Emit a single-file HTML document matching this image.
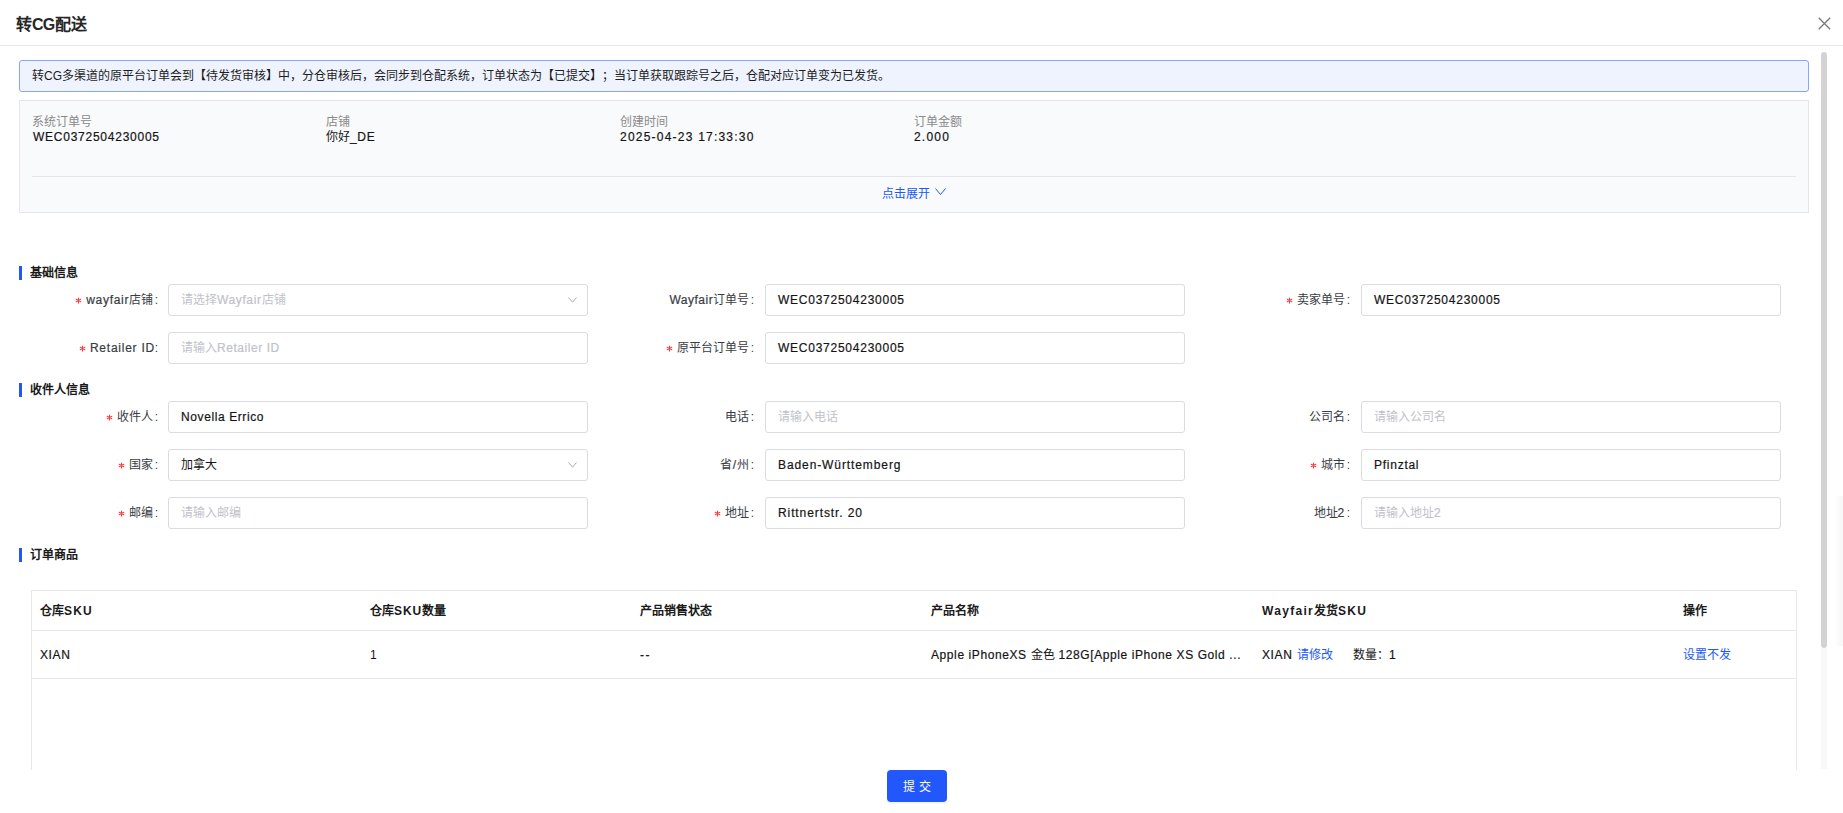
<!DOCTYPE html>
<html lang="zh-CN"><head><meta charset="utf-8">
<style>
*{box-sizing:border-box;margin:0;padding:0}
html,body{text-spacing-trim:space-all;width:1843px;height:813px;overflow:hidden;background:#fff;font-family:"Liberation Sans",sans-serif;color:#222;font-size:12px}
.abs{position:absolute;white-space:nowrap}
[style*="letter-spacing"]{-webkit-text-stroke:.2px currentColor}
.th [style*="letter-spacing"],.title [style*="letter-spacing"]{-webkit-text-stroke:0}
.title{left:16px;top:16px;font-size:16px;font-weight:bold;color:#262626;line-height:18px}
.hline{left:0;top:45px;width:1843px;height:1px;background:#e8e8e8}
.close{left:1817px;top:16px;width:15px;height:15px}
.scroll{left:1821px;top:52px;width:6px;height:596px;background:#d3d3d3;border-radius:3px}
.track{left:1821px;top:648px;width:6px;height:121px;background:#f8f8f8}
.shadow{left:1834px;top:496px;width:9px;height:150px;background:linear-gradient(90deg,rgba(0,0,0,0),rgba(0,0,0,.03))}
.alert{left:19px;top:60px;width:1790px;height:32px;background:#eef3fe;border:1px solid #86a6f9;border-radius:3px;padding-left:12px;line-height:31px;font-size:12px;color:#1c1c1c}
.panel{left:19px;top:100px;width:1790px;height:113px;background:#f9fafc;border:1px solid #e4e6ea}
.plabel{font-size:12px;color:#8a8a8a;line-height:14px}
.pval{font-size:12px;color:#141414;line-height:14px}
.pdiv{left:32px;top:176px;width:1764px;height:1px;background:#e4e6ea}
.expand{left:882px;top:188px;color:#2058f7;font-size:12px;line-height:13px}
.chev{left:935px;top:187px;width:11px;height:9px}
.sec{font-size:12px;font-weight:bold;color:#1a1a1a;line-height:14px}
.bar{width:3px;height:14px;background:#2058f7}
.lbl{text-align:right;width:150px;font-size:12px;color:#383c44;line-height:32px;height:32px}
.ast{display:inline-block;width:7px;height:7px;margin-right:4px;vertical-align:0}
.inp{width:420px;height:32px;border:1px solid #dadcdf;border-radius:3px;background:#fff;padding-left:12px;line-height:30px;font-size:12px;color:#141414}
.ph{color:#bfc2c8}
.c{padding-left:1.5px}
.sel{position:absolute;right:10px;top:12px;width:9px;height:6px}
.th{font-size:12px;font-weight:bold;color:#1a1a1a;line-height:14px}
.td{font-size:12px;color:#141414;line-height:14px}
.link{color:#2058f7}
.btn{left:887px;top:770px;width:60px;height:32px;background:#2157fb;border-radius:4px;color:#fff;text-align:center;line-height:34px;font-size:12px;letter-spacing:4px;padding-left:4px;box-shadow:0 2px 0 rgba(5,80,255,.06)}
</style></head><body>
<div class="abs title">转<span style="letter-spacing:-.7px">CG</span>配送</div>
<svg class="abs close" viewBox="0 0 15 15"><path d="M1.7 1.7L13.2 13.2M13.2 1.7L1.7 13.2" stroke="#7a7a7a" stroke-width="1.3" fill="none"/></svg>
<div class="abs hline"></div>
<div class="abs shadow"></div>
<div class="abs scroll"></div>
<div class="abs track"></div>

<div class="abs alert">转CG多渠道的原平台订单会到【待发货审核】中，分仓审核后，会同步到仓配系统，订单状态为【已提交】；当订单获取跟踪号之后，仓配对应订单变为已发货。</div>

<div class="abs panel"></div>
<div class="abs plabel" style="left:32px;top:115px">系统订单号</div>
<div class="abs pval" id="p1" style="left:33px;top:130px;letter-spacing:.75px">WEC0372504230005</div>
<div class="abs plabel" style="left:326px;top:115px">店铺</div>
<div class="abs pval" style="left:326px;top:130px">你好<span id="p2" style="letter-spacing:.7px">_DE</span></div>
<div class="abs plabel" style="left:620px;top:115px">创建时间</div>
<div class="abs pval" id="p3" style="left:620px;top:130px;letter-spacing:1.22px">2025-04-23 17:33:30</div>
<div class="abs plabel" style="left:914px;top:115px">订单金额</div>
<div class="abs pval" id="p4" style="left:914px;top:130px;letter-spacing:1.2px">2.000</div>
<div class="abs pdiv"></div>
<div class="abs expand">点击展开</div>
<svg class="abs chev" viewBox="0 0 11 9"><path d="M0.5 1.5L5.5 7.5L10.5 1.5" stroke="#2058f7" stroke-width="1" fill="none"/></svg>

<!-- section 1 -->
<div class="abs bar" style="left:19px;top:266px"></div>
<div class="abs sec" style="left:30px;top:266px">基础信息</div>

<div class="abs lbl" style="left:8px;top:284px"><svg class="ast" viewBox="0 0 7 7"><path d="M3.5 .9V6.1M1.2 2.2L5.8 4.8M1.2 4.8L5.8 2.2" stroke="#f73a3f" stroke-width="1.05" stroke-linecap="round"/></svg><span style="letter-spacing:.7px">wayfair</span>店铺<span class="c">:</span></div>
<div class="abs inp" style="left:168px;top:284px"><span class="ph">请选择<span style="letter-spacing:.62px">Wayfair</span>店铺</span><svg class="sel" viewBox="0 0 9 6"><path d="M.5 .5L4.5 5.2L8.5 .5" stroke="#a9acb2" stroke-width="1" fill="none"/></svg></div>
<div class="abs lbl" style="left:604px;top:284px"><span style="letter-spacing:.5px">Wayfair</span>订单号<span class="c">:</span></div>
<div class="abs inp" style="left:765px;top:284px"><span style="letter-spacing:.75px">WEC0372504230005</span></div>
<div class="abs lbl" style="left:1200px;top:284px"><svg class="ast" viewBox="0 0 7 7"><path d="M3.5 .9V6.1M1.2 2.2L5.8 4.8M1.2 4.8L5.8 2.2" stroke="#f73a3f" stroke-width="1.05" stroke-linecap="round"/></svg>卖家单号<span class="c">:</span></div>
<div class="abs inp" style="left:1361px;top:284px"><span style="letter-spacing:.75px">WEC0372504230005</span></div>

<div class="abs lbl" style="left:8px;top:332px"><svg class="ast" viewBox="0 0 7 7"><path d="M3.5 .9V6.1M1.2 2.2L5.8 4.8M1.2 4.8L5.8 2.2" stroke="#f73a3f" stroke-width="1.05" stroke-linecap="round"/></svg><span style="letter-spacing:.75px">Retailer I</span><span style="letter-spacing:.5px">D</span>:</div>
<div class="abs inp" style="left:168px;top:332px"><span class="ph">请输入<span style="letter-spacing:.55px">Retailer ID</span></span></div>
<div class="abs lbl" style="left:604px;top:332px"><svg class="ast" viewBox="0 0 7 7"><path d="M3.5 .9V6.1M1.2 2.2L5.8 4.8M1.2 4.8L5.8 2.2" stroke="#f73a3f" stroke-width="1.05" stroke-linecap="round"/></svg>原平台订单号<span class="c">:</span></div>
<div class="abs inp" style="left:765px;top:332px"><span style="letter-spacing:.75px">WEC0372504230005</span></div>

<!-- section 2 -->
<div class="abs bar" style="left:19px;top:383px"></div>
<div class="abs sec" style="left:30px;top:383px">收件人信息</div>

<div class="abs lbl" style="left:8px;top:401px"><svg class="ast" viewBox="0 0 7 7"><path d="M3.5 .9V6.1M1.2 2.2L5.8 4.8M1.2 4.8L5.8 2.2" stroke="#f73a3f" stroke-width="1.05" stroke-linecap="round"/></svg>收件人<span class="c">:</span></div>
<div class="abs inp" style="left:168px;top:401px"><span style="letter-spacing:.6px">Novella Errico</span></div>
<div class="abs lbl" style="left:604px;top:401px">电话<span class="c">:</span></div>
<div class="abs inp" style="left:765px;top:401px"><span class="ph">请输入电话</span></div>
<div class="abs lbl" style="left:1200px;top:401px">公司名<span class="c">:</span></div>
<div class="abs inp" style="left:1361px;top:401px"><span class="ph">请输入公司名</span></div>

<div class="abs lbl" style="left:8px;top:449px"><svg class="ast" viewBox="0 0 7 7"><path d="M3.5 .9V6.1M1.2 2.2L5.8 4.8M1.2 4.8L5.8 2.2" stroke="#f73a3f" stroke-width="1.05" stroke-linecap="round"/></svg>国家<span class="c">:</span></div>
<div class="abs inp" style="left:168px;top:449px">加拿大<svg class="sel" viewBox="0 0 9 6"><path d="M.5 .5L4.5 5.2L8.5 .5" stroke="#a9acb2" stroke-width="1" fill="none"/></svg></div>
<div class="abs lbl" style="left:604px;top:449px">省<span style="letter-spacing:1px;padding-left:1px">/</span>州<span class="c">:</span></div>
<div class="abs inp" style="left:765px;top:449px"><span style="letter-spacing:.9px">Baden-Württemberg</span></div>
<div class="abs lbl" style="left:1200px;top:449px"><svg class="ast" viewBox="0 0 7 7"><path d="M3.5 .9V6.1M1.2 2.2L5.8 4.8M1.2 4.8L5.8 2.2" stroke="#f73a3f" stroke-width="1.05" stroke-linecap="round"/></svg>城市<span class="c">:</span></div>
<div class="abs inp" style="left:1361px;top:449px"><span style="letter-spacing:.74px">Pfinztal</span></div>

<div class="abs lbl" style="left:8px;top:497px"><svg class="ast" viewBox="0 0 7 7"><path d="M3.5 .9V6.1M1.2 2.2L5.8 4.8M1.2 4.8L5.8 2.2" stroke="#f73a3f" stroke-width="1.05" stroke-linecap="round"/></svg>邮编<span class="c">:</span></div>
<div class="abs inp" style="left:168px;top:497px"><span class="ph">请输入邮编</span></div>
<div class="abs lbl" style="left:604px;top:497px"><svg class="ast" viewBox="0 0 7 7"><path d="M3.5 .9V6.1M1.2 2.2L5.8 4.8M1.2 4.8L5.8 2.2" stroke="#f73a3f" stroke-width="1.05" stroke-linecap="round"/></svg>地址<span class="c">:</span></div>
<div class="abs inp" style="left:765px;top:497px"><span style="letter-spacing:.9px">Rittnertstr. 20</span></div>
<div class="abs lbl" style="left:1200px;top:497px">地址<span style="letter-spacing:.9px">2</span><span class="c">:</span></div>
<div class="abs inp" style="left:1361px;top:497px"><span class="ph">请输入地址<span style="letter-spacing:.9px">2</span></span></div>

<!-- section 3 -->
<div class="abs bar" style="left:19px;top:548px"></div>
<div class="abs sec" style="left:30px;top:548px">订单商品</div>

<div class="abs" style="left:31px;top:590px;width:1766px;height:180px;border:1px solid #e8e8e8;border-bottom:none"></div>
<div class="abs" style="left:32px;top:630px;width:1764px;height:1px;background:#e8e8e8"></div>
<div class="abs" style="left:32px;top:678px;width:1764px;height:1px;background:#e8e8e8"></div>
<div class="abs th" style="left:40px;top:604px">仓库<span style="letter-spacing:1.2px">SKU</span></div>
<div class="abs th" style="left:370px;top:604px">仓库<span style="letter-spacing:.9px">SKU</span>数量</div>
<div class="abs th" style="left:640px;top:604px">产品销售状态</div>
<div class="abs th" style="left:931px;top:604px">产品名称</div>
<div class="abs th" style="left:1262px;top:604px"><span style="letter-spacing:1.3px">Wayfair</span>发货<span style="letter-spacing:1.3px">SKU</span></div>
<div class="abs th" style="left:1683px;top:604px">操作</div>
<div class="abs td" style="left:40px;top:648px;letter-spacing:.6px">XIAN</div>
<div class="abs td" style="left:370px;top:648px">1</div>
<div class="abs td" style="left:640px;top:648px;letter-spacing:1.6px">--</div>
<div class="abs td" style="left:931px;top:648px"><span style="letter-spacing:.59px">Apple iPhoneXS </span>金色<span style="letter-spacing:.59px"> 128G[Apple iPhone XS Gold ...</span></div>
<div class="abs td" style="left:1262px;top:648px;letter-spacing:.6px">XIAN</div>
<div class="abs td link" style="left:1297px;top:648px">请修改</div>
<div class="abs td" style="left:1353px;top:648px">数量：<span style="letter-spacing:.6px">1</span></div>
<div class="abs td link" style="left:1683px;top:648px">设置不发</div>

<div class="abs btn">提交</div>
</body></html>
